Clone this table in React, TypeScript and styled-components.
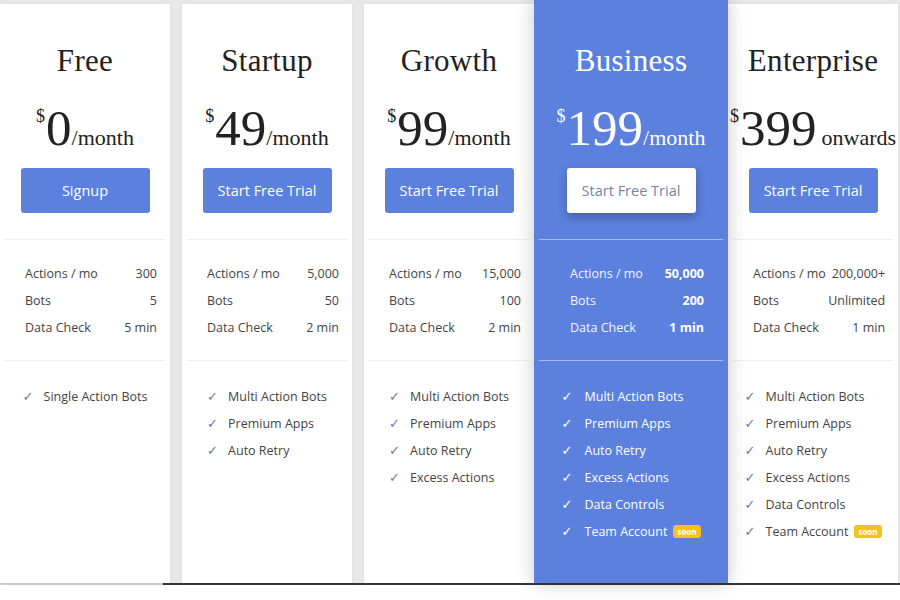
import styled, { createGlobalStyle } from 'styled-components';

const GlobalStyle = createGlobalStyle`
  html, body {
    margin: 0;
    padding: 0;
    background: #ffffff;
  }
  * {
    box-sizing: border-box;
  }
`;

const BLUE = '#5b80dd';

const Page = styled.div`
  width: 900px;
  height: 600px;
  overflow: hidden;
  background: #ffffff;
`;

const Board = styled.div`
  height: 583px;
  display: flex;
  align-items: stretch;
  background: #e8e8e8;
  padding-top: 4px;
`;

const Card = styled.section<{ $featured?: boolean; $gap?: number }>`
  flex: 0 0 ${({ $featured }) => ($featured ? '194px' : '170px')};
  margin-right: ${({ $gap }) => $gap ?? 0}px;
  margin-top: ${({ $featured }) => ($featured ? '-4px' : '0')};
  display: flex;
  flex-direction: column;
  background: ${({ $featured }) => ($featured ? BLUE : '#ffffff')};
  color: ${({ $featured }) => ($featured ? '#ffffff' : '#222222')};
  box-shadow: ${({ $featured }) =>
    $featured ? '0 0 18px rgba(0, 0, 0, 0.22)' : '0 0 4px rgba(0, 0, 0, 0.05)'};
  position: relative;
  z-index: ${({ $featured }) => ($featured ? 2 : 1)};
`;

const Head = styled.div<{ $featured?: boolean }>`
  display: flex;
  flex-direction: column;
  align-items: center;
  padding: ${({ $featured }) => ($featured ? '43px 0 26px' : '39px 0 26px')};
`;

const Title = styled.h2`
  margin: 0;
  font-family: 'Liberation Serif', 'Times New Roman', serif;
  font-weight: 400;
  font-size: 31px;
  line-height: 36px;
  letter-spacing: 0.3px;
`;

const Price = styled.div`
  margin-top: 21px;
  height: 56px;
  display: flex;
  align-items: baseline;
  justify-content: center;
  font-family: 'Liberation Serif', 'Times New Roman', serif;
  white-space: nowrap;
`;

const Currency = styled.span`
  font-size: 18px;
  align-self: flex-start;
  margin-top: 6px;
  margin-right: 1px;
`;

const Amount = styled.span`
  font-size: 51px;
  line-height: 56px;
`;

const Period = styled.span<{ $spaced?: boolean }>`
  font-size: 22px;
  margin-left: ${({ $spaced }) => ($spaced ? '5px' : '0')};
`;

const CtaButton = styled.button<{ $inverted?: boolean }>`
  margin-top: 12px;
  width: 129px;
  height: 45px;
  border: none;
  border-radius: 3px;
  cursor: pointer;
  font-family: 'Open Sans', sans-serif;
  font-size: 14.5px;
  background: ${({ $inverted }) => ($inverted ? '#ffffff' : BLUE)};
  color: ${({ $inverted }) => ($inverted ? '#7884a6' : '#ffffff')};
  box-shadow: ${({ $inverted }) => ($inverted ? '0 4px 10px rgba(0, 0, 0, 0.25)' : 'none')};
`;

const Divider = styled.hr<{ $featured?: boolean }>`
  margin: 0 5px;
  border: none;
  height: 1px;
  background: ${({ $featured }) => ($featured ? '#a6bbef' : '#eeeeee')};
`;

const Stats = styled.div<{ $featured?: boolean }>`
  padding: ${({ $featured }) => ($featured ? '20px 24px 19px 36px' : '20px 13px 19px 25px')};
  font-family: 'Open Sans', sans-serif;
  font-size: 12.5px;
`;

const StatRow = styled.div`
  display: flex;
  justify-content: space-between;
  gap: 6px;
  line-height: 27px;
  white-space: nowrap;
`;

const StatLabel = styled.span<{ $featured?: boolean }>`
  color: ${({ $featured }) => ($featured ? '#f2f5ff' : '#444444')};
`;

const StatValue = styled.span<{ $featured?: boolean }>`
  color: ${({ $featured }) => ($featured ? '#ffffff' : '#444444')};
  font-weight: ${({ $featured }) => ($featured ? 700 : 400)};
`;

const Features = styled.ul`
  list-style: none;
  align-self: center;
  margin: 0;
  padding: 22px 0 0;
  font-family: 'Open Sans', sans-serif;
  font-size: 12.5px;
`;

const Feature = styled.li<{ $featured?: boolean }>`
  display: flex;
  align-items: center;
  line-height: 27px;
  white-space: nowrap;
  color: ${({ $featured }) => ($featured ? '#ffffff' : '#444444')};
`;

const Check = styled.span<{ $featured?: boolean }>`
  width: ${({ $featured }) => ($featured ? '23px' : '21px')};
  font-family: 'DejaVu Sans', sans-serif;
  font-size: 13px;
  font-weight: ${({ $featured }) => ($featured ? 700 : 400)};
  color: ${({ $featured }) => ($featured ? '#ffffff' : '#6f72b8')};
`;

const SoonBadge = styled.span`
  margin-left: 6px;
  padding: 0 4px;
  height: 13px;
  line-height: 13px;
  border-radius: 3px;
  background: #f5c21b;
  color: #ffffff;
  font-family: 'Open Sans', sans-serif;
  font-size: 8px;
  font-weight: 700;
`;

const BottomRule = styled.div`
  display: flex;
  height: 2px;
`;

const RuleSegment = styled.div<{ $dark?: boolean }>`
  flex: ${({ $dark }) => ($dark ? '1 1 auto' : '0 0 163px')};
  background: ${({ $dark }) => ($dark ? '#2d3b40' : '#c9cfcf')};
`;

type Plan = {
  name: string;
  amount: string;
  period: string;
  spaced?: boolean;
  cta: string;
  stats: [string, string][];
  features: { label: string; soon?: boolean }[];
  featured?: boolean;
  gap?: number;
};

const allFeatures = [
  { label: 'Multi Action Bots' },
  { label: 'Premium Apps' },
  { label: 'Auto Retry' },
  { label: 'Excess Actions' },
  { label: 'Data Controls' },
  { label: 'Team Account', soon: true },
];

const plans: Plan[] = [
  {
    name: 'Free',
    amount: '0',
    period: '/month',
    cta: 'Signup',
    stats: [
      ['Actions / mo', '300'],
      ['Bots', '5'],
      ['Data Check', '5 min'],
    ],
    features: [{ label: 'Single Action Bots' }],
    gap: 12,
  },
  {
    name: 'Startup',
    amount: '49',
    period: '/month',
    cta: 'Start Free Trial',
    stats: [
      ['Actions / mo', '5,000'],
      ['Bots', '50'],
      ['Data Check', '2 min'],
    ],
    features: allFeatures.slice(0, 3),
    gap: 12,
  },
  {
    name: 'Growth',
    amount: '99',
    period: '/month',
    cta: 'Start Free Trial',
    stats: [
      ['Actions / mo', '15,000'],
      ['Bots', '100'],
      ['Data Check', '2 min'],
    ],
    features: allFeatures.slice(0, 4),
  },
  {
    name: 'Business',
    amount: '199',
    period: '/month',
    cta: 'Start Free Trial',
    stats: [
      ['Actions / mo', '50,000'],
      ['Bots', '200'],
      ['Data Check', '1 min'],
    ],
    features: allFeatures,
    featured: true,
  },
  {
    name: 'Enterprise',
    amount: '399',
    period: 'onwards',
    spaced: true,
    cta: 'Start Free Trial',
    stats: [
      ['Actions / mo', '200,000+'],
      ['Bots', 'Unlimited'],
      ['Data Check', '1 min'],
    ],
    features: allFeatures,
  },
];

function PlanCard({ plan }: { plan: Plan }) {
  const f = plan.featured;
  return (
    <Card $featured={f} $gap={plan.gap}>
      <Head $featured={f}>
        <Title>{plan.name}</Title>
        <Price>
          <Currency>$</Currency>
          <Amount>{plan.amount}</Amount>
          <Period $spaced={plan.spaced}>{plan.period}</Period>
        </Price>
        <CtaButton type="button" $inverted={f}>
          {plan.cta}
        </CtaButton>
      </Head>
      <Divider $featured={f} />
      <Stats $featured={f}>
        {plan.stats.map(([label, value]) => (
          <StatRow key={label}>
            <StatLabel $featured={f}>{label}</StatLabel>
            <StatValue $featured={f}>{value}</StatValue>
          </StatRow>
        ))}
      </Stats>
      <Divider $featured={f} />
      <Features>
        {plan.features.map((feat) => (
          <Feature key={feat.label} $featured={f}>
            <Check $featured={f}>✓</Check>
            {feat.label}
            {feat.soon && <SoonBadge>soon</SoonBadge>}
          </Feature>
        ))}
      </Features>
    </Card>
  );
}

export default function App() {
  return (
    <Page>
      <GlobalStyle />
      <Board>
        {plans.map((plan) => (
          <PlanCard key={plan.name} plan={plan} />
        ))}
      </Board>
      <BottomRule>
        <RuleSegment />
        <RuleSegment $dark />
      </BottomRule>
    </Page>
  );
}
